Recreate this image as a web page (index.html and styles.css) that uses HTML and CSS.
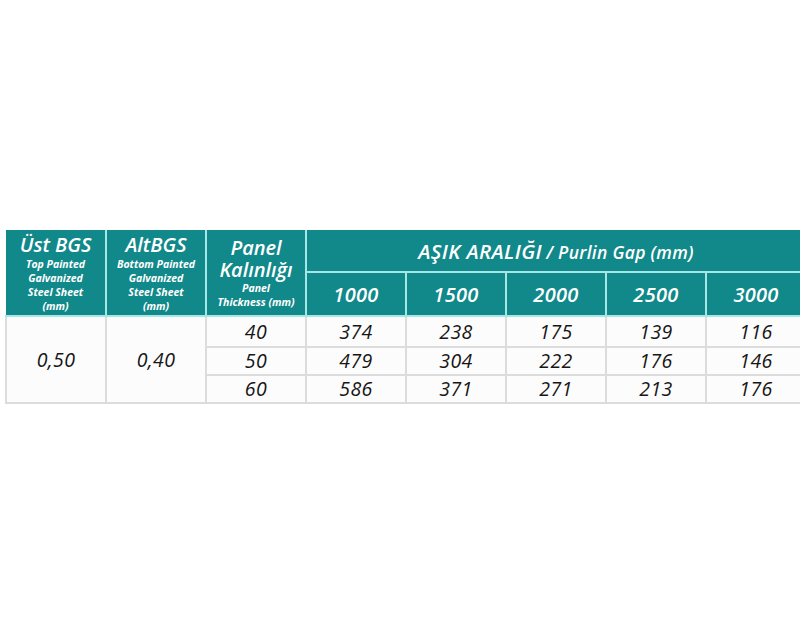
FILE: index.html
```html
<!DOCTYPE html>
<html lang="tr">
<head>
<meta charset="utf-8">
<link rel="stylesheet" href="styles.css">
</head>
<body>
<div class="page">
  <table class="spec">
    <colgroup>
      <col class="c1"><col class="c"><col class="c"><col class="c"><col class="c"><col class="c"><col class="c"><col class="c">
    </colgroup>
    <thead>
      <tr class="h1">
        <th rowspan="2"><div class="t">Üst BGS</div><div class="s">Top Painted<br>Galvanized<br>Steel Sheet<br>(mm)</div></th>
        <th rowspan="2"><div class="t">AltBGS</div><div class="s">Bottom Painted<br>Galvanized<br>Steel Sheet<br>(mm)</div></th>
        <th rowspan="2"><div class="t tp">Panel</div><div class="t tp">Kalınlığı</div><div class="s">Panel<br>Thickness (mm)</div></th>
        <th colspan="5" class="gap"><span class="big">AŞIK ARALIĞI</span> <span class="sm">/ Purlin Gap (mm)</span></th>
      </tr>
      <tr class="h2">
        <th>1000</th><th>1500</th><th>2000</th><th>2500</th><th>3000</th>
      </tr>
    </thead>
    <tbody>
      <tr class="r1">
        <td rowspan="3">0,50</td><td rowspan="3">0,40</td>
        <td>40</td><td>374</td><td>238</td><td>175</td><td>139</td><td>116</td>
      </tr>
      <tr>
        <td>50</td><td>479</td><td>304</td><td>222</td><td>176</td><td>146</td>
      </tr>
      <tr>
        <td>60</td><td>586</td><td>371</td><td>271</td><td>213</td><td>176</td>
      </tr>
    </tbody>
  </table>
</div>
</body>
</html>
```
FILE: styles.css
```css
html, body {
  margin: 0;
  padding: 0;
  background: #ffffff;
}
.page {
  width: 800px;
  height: 640px;
  overflow: hidden;
  padding: 230px 0 0 5px;
  box-sizing: border-box;
  font-family: "Open Sans", "Liberation Sans", sans-serif;
  font-style: italic;
}
.spec {
  border-collapse: collapse;
  table-layout: fixed;
  width: 800px;
}
.c1 { width: 100px; }
.c { width: 100px; }
.spec th {
  background: #118889;
  color: #ffffff;
  border: 2px solid #a6e6e4;
  border-top: none;
  padding: 0;
  text-align: center;
  vertical-align: middle;
  font-weight: 600;
}
.spec thead tr.h1 th:first-child { border-left: none; }
.h1 th { height: 41px; }
.h2 th { height: 42px; font-size: 20px; letter-spacing: 0.3px; }
.t {
  font-size: 20px;
  line-height: 24px;
  font-weight: 600;
}
.t.tp { font-size: 20px; line-height: 22px; }
.s {
  font-size: 10.5px;
  line-height: 14px;
  font-weight: 700;
}
.gap .big { font-size: 20.5px; font-weight: 600; letter-spacing: 0.4px; }
.gap .sm { font-size: 17.5px; font-weight: 600; letter-spacing: 0.3px; }
.spec td {
  background: #fdfcfc;
  color: #161616;
  border: 2px solid #dcdcdc;
  text-align: center;
  vertical-align: middle;
  height: 26px;
  padding: 0;
  font-size: 19.5px;
  line-height: 24px;
  font-weight: 400;
  letter-spacing: 0.4px;
}
.spec tr.r1 td { height: 29px; }
```
